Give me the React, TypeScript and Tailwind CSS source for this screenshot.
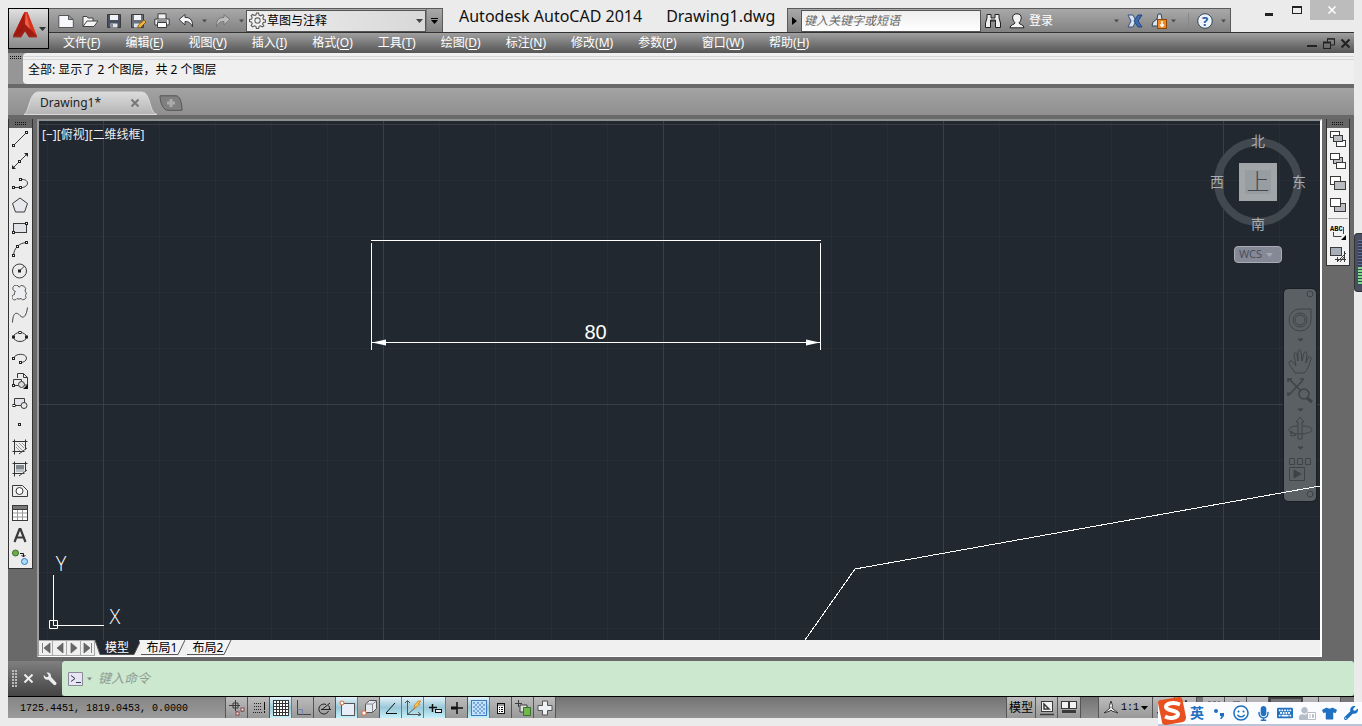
import type { ReactNode } from "react";
import { FaKeyboard, FaMicrophone, FaRegSmile, FaTshirt, FaUser, FaWrench } from "react-icons/fa";

const uiFont = "font-['Noto_Sans','Noto_Sans_CJK_SC',sans-serif]";

const menus = [
  ["文件", "F"],
  ["编辑", "E"],
  ["视图", "V"],
  ["插入", "I"],
  ["格式", "O"],
  ["工具", "T"],
  ["绘图", "D"],
  ["标注", "N"],
  ["修改", "M"],
  ["参数", "P"],
  ["窗口", "W"],
  ["帮助", "H"],
];

function Icon({ children, size = 16 }: { children: ReactNode; size?: number }) {
  return (
    <svg width={size} height={size} viewBox="0 0 16 16" fill="none" stroke="#3a3a3a" className="shrink-0">
      {children}
    </svg>
  );
}

function Caret({ className = "text-[#444]" }: { className?: string }) {
  return (
    <svg width="7" height="4" viewBox="0 0 7 4" fill="currentColor" className={`shrink-0 ${className}`}>
      <path d="M0 0h7L3.500 4z" />
    </svg>
  );
}

function Node({ x, y }: { x: number; y: number }) {
  return <rect x={x - 1} y={y - 1} width="2" height="2" fill="#fff" stroke="#222" />;
}

const drawTools: { label: string; icon: ReactNode }[] = [
  { label: "直线", icon: <><path d="M2 14 14 2" /><Node x={1.5} y={14.5} /><Node x={14.5} y={1.5} /></> },
  { label: "构造线", icon: <><path d="M2 14 14 2" /><path d="M0 16v-4l4 4zM16 0v4l-4-4z" fill="#222" stroke="none" /><Node x={7.5} y={8.5} /></> },
  { label: "多段线", icon: <><path d="M1.500 12.500h7M8.500 4.500c9-1 9 7 2 8H8.500" /><Node x={1.5} y={12.5} /><Node x={8.5} y={12.5} /><Node x={8.5} y={4.5} /></> },
  { label: "正多边形", icon: <path d="M8 1 15.500 6.500 12.500 15h-9L.5 6.500z" fill="#e6e8ee" /> },
  { label: "矩形", icon: <><rect x="1.500" y="4.500" width="13" height="9" fill="#e0e2e8" /><Node x={1.5} y={13.5} /><Node x={14.5} y={4.5} /></> },
  { label: "圆弧", icon: <><path d="M1.500 14.500C2 7 7 2 14.500 1.500" /><Node x={1.5} y={14.5} /><Node x={5.5} y={5.5} /><Node x={14.5} y={1.5} /></> },
  { label: "圆", icon: <><circle cx="7.500" cy="8" r="7" /><path d="m7.500 8 5-5" /><Node x={7.5} y={8} /></> },
  { label: "修订云线", icon: <path d="M3.500 6.500A3.200 3.200 0 1 1 7 2.200 3.300 3.300 0 1 1 13 6a3.200 3.200 0 0 1 .5 4.500 2.700 2.700 0 1 1-4.500 3 3.700 3.700 0 0 1-4 0A2.700 2.700 0 1 1 2.500 9.500a2.500 2.500 0 0 1 1-3z" fill="#eceef2" stroke="#555" /> },
  { label: "样条曲线", icon: <path d="M.5 15.500C1 3 6 6 8 8.500S14 12 15.500.5" stroke="#444" /> },
  { label: "椭圆", icon: <><ellipse cx="8" cy="8" rx="6.500" ry="4.500" /><Node x={1.5} y={8} /><Node x={14.5} y={8} /><Node x={8} y={3.5} /></> },
  { label: "椭圆弧", icon: <><path d="M1.500 7.500C3 2 14 2 14.500 7c0 3-3 4.500-6 4.500" /><Node x={1.5} y={7.5} /><Node x={8.5} y={11.5} /></> },
  { label: "插入块", icon: <><path d="M5.500 5V.5h6l4 4V12h-4M1.500 12.500v-6h8v2M1.500 12.500h6" /><path d="M11.500.5v4h4" /><circle cx="9.500" cy="11.500" r="3" fill="#ddd" /><path d="M16 11v5h-5z" fill="#111" stroke="none" /><Node x={1.5} y={12.5} /></> },
  { label: "创建块", icon: <><path d="M2.500 10.500v-7h10v4M2.500 10.500h7" fill="#e4e5ea" /><circle cx="12" cy="10.500" r="3" fill="#e8e8e8" /><Node x={2} y={10.5} /></> },
  { label: "点", icon: <Node x={7.5} y={7.5} /> },
  { label: "图案填充", icon: <><path d="m4 5 7 7M4 8l4 4M7 4l5 5M10 4l3 3" stroke="#999" /><path d="M.5 2.500h15M.5 12.500h12M2.500.5v15M13.500.5v10" stroke="#333" /><path d="m7 15 8-6" stroke="#444" /></> },
  { label: "渐变色", icon: <><rect x="4" y="4" width="8" height="4" fill="#7f878d" stroke="none" /><path d="M4 8h8v3H4z" fill="#b9bec2" stroke="none" /><path d="M.5 2.500h15M.5 12.500h12M2.500.5v15M13.500.5v10" stroke="#333" /><path d="m7 15 8-6" stroke="#444" /></> },
  { label: "面域", icon: <><path d="M.5 2.500h10l5 5v6H.5z" fill="#eee" /><circle cx="7.500" cy="8" r="3.500" fill="#fff" /></> },
  { label: "表格", icon: <><rect x=".5" y=".5" width="15" height="15" fill="#fff" /><path d="M1 1h14v3H1z" fill="#777" stroke="none" /><path d="M.5 4.500h15" /><path d="M1 8h14M1 12h14M5.500 5v10M10.500 5v10" stroke="#999" /></> },
  { label: "多行文字", icon: <path d="m2.500 15 5-13h1l5 13M4.500 10.500h7" strokeWidth="2.200" /> },
  { label: "添加选定对象", icon: <><circle cx="3.500" cy="4" r="3" fill="#6cae48" stroke="#3f6b2c" /><circle cx="12.500" cy="12.500" r="3" fill="#a9dcff" stroke="#3278b8" /><path d="M8 4.500h3.500v3M9.500 6l2 2 2-2" stroke="#111" /></> },
];

const orderTools: { label: string; icon: ReactNode }[] = [
  { label: "前置", icon: <><rect x=".5" y=".5" width="9" height="6" fill="#fff" /><rect x="6.500" y="9.500" width="9" height="6" fill="#fff" /><rect x="3.500" y="4.500" width="9" height="6" fill="#b9bdc2" /></> },
  { label: "后置", icon: <><rect x="3.500" y="4.500" width="9" height="6" fill="#b9bdc2" /><rect x=".5" y=".5" width="9" height="6" fill="#fff" /><rect x="6.500" y="9.500" width="9" height="6" fill="#fff" /></> },
  { label: "置于对象之上", icon: <><rect x=".5" y="1.500" width="10" height="8" fill="#fff" /><rect x="4.500" y="6.500" width="11" height="8" fill="#b9bdc2" /></> },
  { label: "置于对象之下", icon: <><rect x="4.500" y="6.500" width="11" height="8" fill="#b9bdc2" /><rect x=".5" y="1.500" width="10" height="8" fill="#fff" /></> },
];

const statusTools: { label: string; on?: boolean; icon: ReactNode }[] = [
  { label: "推断约束", icon: <><path d="M0 5.500h11M6.500 0v11M4 3h5v5H4zM8 11v4M13 8v4" /><rect x="7" y="12" width="3" height="3" fill="#eee" stroke="#844" /><rect x="12" y="8" width="3" height="3" fill="#eee" stroke="#844" /></> },
  { label: "捕捉模式", icon: <><path d="M3 3.500h8M3 6.500h8M3 9.500h8M2 12.500h9" strokeDasharray="1 1" stroke="#222" /><path d="M13.500 2v8M13.500 11v2" stroke="#111" /></> },
  { label: "栅格显示", on: true, icon: <><rect x=".5" y=".5" width="15" height="15" fill="#fff" /><path d="M0 3.500h16M0 6.500h16M0 9.500h16M0 12.500h16M3.500 0v16M6.500 0v16M9.500 0v16M12.500 0v16" stroke="#333" /></> },
  { label: "正交模式", icon: <><path d="M2.500 0v14.500H16" stroke="#444" /><path d="M2.500 9.500h5v5" stroke="#7581b5" /></> },
  { label: "极轴追踪", icon: <><path d="M11.500 11A5 5 0 1 1 9 4.500M4 9.500h10M5 9.500 13 3" stroke="#222" /><path d="M11.500 5.500a5 5 0 0 1 1 4" stroke="#111" /></> },
  { label: "对象捕捉", on: true, icon: <><rect x="2.500" y="3.500" width="13" height="12" fill="#e8eef8" stroke="#555" /><circle cx="3" cy="3" r="2" fill="#fff" stroke="#e0622c" /></> },
  { label: "三维对象捕捉", icon: <><path d="m4.500 4 4-3.500h7v8l-4 4h-7z" fill="#e5e9f2" stroke="#555" /><path d="M4.500 4h7v8M11.500 4l4-3" stroke="#888" /><circle cx="3" cy="13" r="2.200" fill="#fff" stroke="#e0622c" /></> },
  { label: "对象捕捉追踪", on: true, icon: <path d="M3 13.500h11M3 13 12 3" stroke="#111" /> },
  { label: "动态UCS", on: true, icon: <><path d="M2.500 1v13.500H16M0 3l2.500-2.500L5 3M13 12l3 2.500-3 1.500M2 15l10-9" stroke="#555" /><path d="M9 6 13 1h3l-3 3h2l-6 5 1-3z" fill="#ffc64a" stroke="#c66b13" strokeWidth=".6" /></> },
  { label: "动态输入", on: true, icon: <><path d="M2 7.500h8M5.500 4v8" strokeWidth="1.500" stroke="#111" /><rect x="8.500" y="9.500" width="6" height="3" fill="#eee" stroke="#111" /></> },
  { label: "线宽", icon: <><path d="M2 8h6" strokeWidth="3" stroke="#111" /><path d="M7 8h7M8 2v12" strokeWidth="1.500" stroke="#111" /></> },
  { label: "透明度", on: true, icon: <><rect x=".5" y=".5" width="15" height="15" fill="#c3e0fd" stroke="#3e7cbd" /><path d="M2 3h12M2 7h12M2 11h12" strokeDasharray="2 2" strokeWidth="2" stroke="#79a9d8" /><path d="M4 5h10M4 9h10M4 13h10" strokeDasharray="2 2" strokeWidth="2" stroke="#79a9d8" /></> },
  { label: "快捷特性", icon: <><rect x="4.500" y="3.500" width="7" height="10" fill="#fff" stroke="#111" /><path d="M5 5h6" stroke="#333" /><path d="M6 7.500h1M8 7.500h2M6 9.500h1M8 9.500h2M6 11.500h1M8 11.500h2" stroke="#111" /></> },
  { label: "选择循环", icon: <><path d="M0 3.500h7M3.500 0v7" /><path d="M5 5h7v7H5z" fill="#dfe3e6" /><path d="M8.500 7.500h7v8h-7z" fill="#70b84b" stroke="#39702a" /></> },
  { label: "注释监视器", icon: <path d="M5.500 1h5v4.500H15v5h-4.500V15h-5v-4.500H1v-5h4.500z" fill="#eef1f5" stroke="#555" /> },
];

const quickTools: { label: string; icon: ReactNode }[] = [
  { label: "新建", icon: <path d="M.8 2.500h10l4.500 4v8H.8zM10.500 2.500v4h4.500" fill="#f6f7fa" stroke="#555" /> },
  { label: "打开", icon: <path d="M1 13.500v-10h4l1 1.500h5v3h5l-4 5.500zM1 13.500 5 8h6" fill="#f3f3f5" stroke="#444" /> },
  { label: "保存", icon: <><path d="M1.500 1.500h13v13h-13z" fill="#4a5063" /><path d="M4 2h8v5H4z" fill="#f0f2f6" stroke="none" /><path d="M4.500 10.500h7v4h-7z" fill="#dfe2e8" stroke="none" /><path d="M6 11v3" stroke="#333" /></> },
  { label: "另存为", icon: <><path d="M1.500 1.500h12v13h-12z" fill="#6a6f7b" /><path d="M4 2h7v5H4z" fill="#f0f2f6" stroke="none" /><path d="M4 10.500h7v4H4z" fill="#dfe2e8" stroke="none" /><path d="m7.500 15 1-3 5.500-5 2 2-5.500 5.500z" fill="#f3b93f" stroke="#8c5a14" /></> },
  { label: "打印", icon: <><path d="M4 6V.8h8V6M.8 6h14.400v6H.8z" fill="#eef0f4" /><path d="M3.500 9.500h9v5h-9z" fill="#fff" /><path d="M3 8h10" /></> },
];

function DropDot() {
  return <Caret className="w-[5px] text-[#4d4d4d]" />;
}

function TitleBar() {
  return (
    <div className="flex h-8 items-end">
      <div className="flex h-6 shrink-0 items-center border-t border-r border-[#5a5a5a] bg-linear-to-b from-[#a9a9a9] to-[#828282]">
        <div className="flex items-center gap-2 pl-[9px]">
          {quickTools.map((t) => (
            <button key={t.label} aria-label={t.label}>
              <Icon>{t.icon}</Icon>
            </button>
          ))}
          <button aria-label="放弃" className="flex items-center gap-2">
            <Icon><path d="M1 6.500 7 1.500v3c6-.5 8 4 7.500 9.500C13 10 11 8.500 7 8.500v3.500z" fill="#f4f5f8" /></Icon>
            <DropDot />
          </button>
          <button aria-label="重做" className="flex items-center gap-2">
            <Icon><path d="M15 6.500 9 1.500v3C3 4 1 8.500 1.500 14 3 10 5 8.500 9 8.500v3.500z" fill="#bbb" stroke="#777" /></Icon>
            <DropDot />
          </button>
        </div>
        <button className="ml-0.5 flex h-[22px] w-[180px] items-center gap-px border border-[#555] bg-linear-to-r from-[#eee] to-[#d8d8d8] px-0.5 text-xs text-black">
          <Icon size={17}>
            <path d="m7 1 2 0 .5 2 1.500.6L13 2.500 14 4l-1 1.600.5 1.400 2 .5v2l-2 .3-.7 1.500L14 13l-1.500 1-1.600-1-1.400.5L9 15.500H7l-.5-2L5 13l-1.700 1L2 12.700l1-1.700L2.500 9.500.5 9V7l2-.3L3 5.200 2 3.500 3.500 2.300 5 3.200 6.500 2.800z" stroke="#555" fill="#f2f2f2" />
            <circle cx="8" cy="8" r="2.500" stroke="#666" />
          </Icon>
          <span className="flex-1 text-left">草图与注释</span>
          <Caret />
        </button>
        <button aria-label="自定义" className="flex h-full w-4 flex-col items-center justify-center gap-px border-l border-[#777]">
          <span className="h-px w-[7px] bg-black" />
          <Caret className="text-black" />
        </button>
      </div>
      <h1 className="flex h-full min-w-0 flex-1 items-center gap-6 overflow-hidden pl-4 font-['Noto_Sans',sans-serif] text-base whitespace-nowrap text-[#111]">
        <span>Autodesk AutoCAD 2014</span>
        <span>Drawing1.dwg</span>
      </h1>
      <div className="flex h-6 w-[444px] shrink-0 items-center border border-b-0 border-[#5a5a5a] bg-linear-to-b from-[#a9a9a9] to-[#828282]">
        <button aria-label="展开" className="flex w-[13px] justify-center">
          <svg width="5" height="8" viewBox="0 0 5 8"><path d="M0 0v8l5-4z" /></svg>
        </button>
        <input
          aria-label="搜索"
          placeholder="键入关键字或短语"
          className="h-[22px] w-[180px] border border-[#555] bg-linear-to-b from-[#eee] to-white pl-0.5 text-xs italic placeholder:text-[#666]"
        />
        <button aria-label="搜索" className="ml-1">
          <Icon><path d="M2 5V1.500h4V5h4V1.500h4V5l1.500 5v4.500h-5V7H5.500v7.500H.5V10zM5.500 8h5" fill="#eee" stroke="#222" /></Icon>
        </button>
        <button className="ml-2 flex items-center gap-1 text-xs text-white">
          <Icon><path d="M8 .8c6 0 4.500 7 2 9 0 2 5 1.500 5 5H1c0-3.500 5-3 5-5C3 7 2 .8 8 .8z" fill="#f3f4f6" stroke="#222" /></Icon>
          登录
        </button>
        <span className="ml-auto" />
        <DropDot />
        <button aria-label="Exchange" className="ml-2">
          <Icon><path d="M1 2h5l3 6-3 6H1l3-6z" fill="#d7e3f2" stroke="#34517d" /><path d="M15 2h-4L7 8l4 6h4l-4-6z" fill="#3d6cb0" stroke="#23457f" /></Icon>
        </button>
        <button aria-label="保持连接" className="mr-1 ml-2 flex items-center gap-1">
          <Icon><path d="M7 1h3l1 5 4 7H1l1-4 4-3z" fill="#dde4ec" stroke="#345" /><rect x="6.500" y="6.500" width="9" height="9" fill="#ed8a23" stroke="#8a4708" /><path d="M11 8v4M9 11.500l2 2 2-2" stroke="#fff" strokeWidth="1.500" /></Icon>
          <DropDot />
        </button>
        <button aria-label="帮助" className="mr-1 ml-2 flex items-center gap-2 border-l border-[#888] pl-2">
          <svg width="16" height="16" viewBox="0 0 16 16">
            <circle cx="8" cy="8" r="7.300" fill="#eef4fb" stroke="#345" />
            <text x="8" y="13" textAnchor="middle" fontSize="13" fontWeight="700" fill="#2459a5">?</text>
          </svg>
          <DropDot />
        </button>
      </div>
      <div className="ml-6 flex h-5 shrink-0 self-start text-[#222]">
        <button aria-label="最小化" className="flex w-7 items-center justify-center">
          <span className="mt-2 h-[3px] w-2 bg-[#222]" />
        </button>
        <button aria-label="最大化" className="flex w-[27px] items-center justify-center">
          <span className="h-2 w-2.5 border border-t-2 border-[#222]" />
        </button>
        <button aria-label="关闭" className="flex w-11 items-center justify-center bg-[#bcbcbc]">
          <svg width="8" height="8" viewBox="0 0 8 8" stroke="#fff" strokeWidth="1.500"><path d="m.5.5 7 7M7.500.5l-7 7" /></svg>
        </button>
      </div>
    </div>
  );
}

function MenuBar() {
  return (
    <nav className="flex h-[21px] items-center gap-px border-t border-[#333] bg-linear-to-b from-[#a0a0a0] to-[#555] pl-0.5 text-xs text-white">
      {menus.map(([name, key]) => (
        <button key={key} className="px-3 leading-5 whitespace-nowrap">
          {name}(<span className="underline underline-offset-2">{key}</span>)
        </button>
      ))}
      <div className="ml-auto flex items-center gap-1.5 pr-1">
        <button aria-label="最小化图形" className="mt-1.5 h-0.5 w-2.5 bg-[#222]" />
        <button aria-label="还原图形">
          <svg width="12" height="11" viewBox="0 0 12 11" fill="none" stroke="#222"><path d="M4.500 4V1h7v6H8M4 .8h8" /><rect x=".5" y="4.500" width="7" height="6" /><path d="M0 4.500h8" strokeWidth="2" /></svg>
        </button>
        <button aria-label="关闭图形">
          <svg width="9" height="9" viewBox="0 0 9 9" stroke="#222" strokeWidth="2.200"><path d="m.5.5 8 8M8.500.5l-8 8" /></svg>
        </button>
      </div>
    </nav>
  );
}

function Header() {
  return (
    <header className="flex">
      <div className="flex flex-col pt-2">
        <button aria-label="应用程序菜单" className="h-[41px] w-[41px] border border-black bg-linear-to-b from-[#e0e0e0] to-[#8a8a8a]">
          <svg width="39" height="39" viewBox="0 0 39 39">
            <path d="M15.500 3 4 27l8 1 4-6 4 6 8-1L18.500 3z" fill="#d8321c" />
            <path d="M15.500 3 4 27l8-4 4-8z" fill="#a81a10" />
            <path d="M16 15 4 27v1.500h8l4-6 4 6h8V27z" fill="#8e1710" opacity=".75" />
            <path d="m17 3 4 17-5-5z" fill="#f0624a" />
            <path d="M30 18h7l-3.500 4z" fill="#333" />
          </svg>
        </button>
        <div className="flex-1 bg-[#5d5d5d]" />
      </div>
      <div className="flex min-w-0 flex-1 flex-col">
        <TitleBar />
        <MenuBar />
      </div>
    </header>
  );
}

const dotRow = "h-px w-full bg-[repeating-linear-gradient(90deg,#111_0_1px,transparent_1px_2px)]";

function Dots() {
  return (
    <div className="flex w-3 flex-col gap-px">
      <div className={dotRow} />
      <div className={dotRow} />
    </div>
  );
}

function Grip() {
  return (
    <div className="flex h-[9px] items-center justify-center bg-[#666]">
      <Dots />
    </div>
  );
}

function FileTabs() {
  return (
    <div className="flex h-[35px] items-end border-y-4 border-[#696969] bg-linear-to-b from-[#a3a3a3] to-[#8f8f8f] pl-4">
      <div className="relative flex h-6 w-[135px] items-center">
        <svg className="absolute inset-0" width="135" height="24" viewBox="0 0 135 24">
          <defs>
            <linearGradient id="tab" x2="0" y2="1">
              <stop stopColor="#dcdcdc" />
              <stop offset="1" stopColor="#b4b4b4" />
            </linearGradient>
          </defs>
          <path d="M0 23.500C5 23 5 1 14 1h104c9 0 7 22 15 22.500z" fill="url(#tab)" stroke="#d9d9d9" />
        </svg>
        <button className="relative flex-1 pl-4 text-left text-xs text-[#222]">Drawing1*</button>
        <button aria-label="关闭选项卡" className="relative mr-5">
          <svg width="8" height="8" viewBox="0 0 8 8" stroke="#777" strokeWidth="2"><path d="m.5.5 7 7M7.500.5l-7 7" /></svg>
        </button>
      </div>
      <button aria-label="新图形" className="mb-1">
        <svg width="24" height="16" viewBox="0 0 24 16" fill="#808080" stroke="#555">
          <path d="M1 .8h16c4 0 6 7 6 14.500H9C4 15.500 1 7 1 .8z" />
          <path d="M12 4v8M8 8h8" stroke="#aaa" strokeWidth="3" />
        </svg>
      </button>
    </div>
  );
}

function DrawToolbar() {
  return (
    <div className="w-[25px] shrink-0 self-start border border-t-0 border-[#333] bg-[#ececec]">
      <Grip />
      {drawTools.map((t) => (
        <button key={t.label} aria-label={t.label} className="flex h-[22px] w-full items-center pl-[3px]">
          <Icon>{t.icon}</Icon>
        </button>
      ))}
    </div>
  );
}

function OrderToolbar() {
  return (
    <div className="mx-1 w-6 shrink-0 self-start border border-t-0 border-[#333] bg-[#f2f2f2]">
      <Grip />
      {orderTools.map((t) => (
        <button key={t.label} aria-label={t.label} className="flex h-[22px] w-full items-center justify-center">
          <Icon>{t.icon}</Icon>
        </button>
      ))}
      <div className="mx-px my-[2px] h-px bg-[#aaa]" />
      <button aria-label="注释前置" className="flex h-[22px] w-full items-center justify-center">
        <svg width="16" height="16" viewBox="0 0 16 16">
          <text x="0" y="7" fontSize="7" fontWeight="700" fontFamily="Liberation Mono">ABC</text>
          <path d="M3.500 8v4.500h8M13.500 3v7" fill="none" stroke="#444" />
          <path d="M16 11v5h-5z" />
        </svg>
      </button>
      <button aria-label="图案填充后置" className="flex h-[22px] w-full items-center justify-center">
        <Icon><rect x=".5" y="1.500" width="11" height="8" fill="#a9afb8" /><path d="M5 13.500h11M7.500 11v5M14.500 5v11M8 15l8-8M10 16l4-5" /></Icon>
      </button>
    </div>
  );
}

function ViewCube() {
  return (
    <div className="absolute top-[10px] right-[12px] flex w-[100px] flex-col items-center">
      <svg width="100" height="102" viewBox="0 0 100 102" fontSize="14" fill="#a9adb0" textAnchor="middle" className="overflow-visible font-['Noto_Sans_CJK_SC',sans-serif]">
        <circle cx="50" cy="51" r="40" fill="none" stroke="#414850" strokeWidth="8" />
        <rect x="31" y="32" width="38" height="38" fill="#a3a6a8" />
        <rect x="37" y="39" width="26" height="24" fill="#989da1" />
        <text x="50" y="15">北</text>
        <text x="50" y="98">南</text>
        <text x="9" y="56">西</text>
        <text x="91" y="56">东</text>
        <text x="50" y="59" fontSize="23" fontWeight="300" fill="#41474d">上</text>
      </svg>
      <button className="mt-[13px] flex h-[17px] w-12 items-center gap-1 rounded-sm border border-[#a9acb6] bg-[#858895] pl-1 text-[11px] text-[#4b4f5c]">
        WCS
        <Caret className="text-[#a5a8b3]" />
      </button>
    </div>
  );
}

function NavBar() {
  return (
    <div className="absolute top-[168px] right-1 flex w-8 flex-col items-center rounded-sm bg-[#5b6064] outline outline-[#1a1f25]">
      <svg width="32" height="212" viewBox="0 0 32 212" fill="none" stroke="#3e4347">
        <circle cx="26" cy="5" r="3" />
        <path d="M16 20h11v11a11 11 0 1 1-11-11z" />
        <circle cx="16" cy="31" r="7" />
        <circle cx="16" cy="31" r="5" />
        <path d="M14 50h5l-2.500 2zM14 120h5l-2.500 2zM14 158h5l-2.500 2z" fill="#3e4347" />
        <path d="M11 84C8 78 3 75 6 72c2-1 4 2 6 5l-2-11c0-3 3-3 3 0l1 6V63c0-3 3-3 3 0l1 9 2-8c1-2 3-1 3 1l-1 9 2-5c1-2 4-1 3 1-2 6-3 11-7 14z" />
        <path d="m5 90 15 15M5 106 19 91M4 90h4M4 89v4M20 90h-4M4 107v-4" strokeWidth="1.500" />
        <circle cx="20" cy="105" r="5" fill="#5b6064" strokeWidth="1.500" />
        <path d="m23 109 5 4" strokeWidth="3" />
        <path d="M14 150v-17h-2l4-5 4 5h-2v17z" />
        <path d="M14 137c-6 0-9 2-9 4s5 4 11 4 12-2 12-4-4-4-9-4M7 142l5 4-5 1z" />
        <path d="M5.500 169.500h5v6h-5zM13.500 169.500h5v6h-5zM21.500 169.500h5v6h-5zM5.500 178.500h15v13h-15z" />
        <path d="m10 181 7 4-7 4z" fill="#3e4347" />
        <circle cx="26" cy="205" r="3" />
      </svg>
    </div>
  );
}

function Canvas() {
  return (
    <div className="relative min-h-0 flex-1 overflow-hidden bg-[#212830]">
      <svg className="absolute inset-0 h-full w-full">
        <defs>
          <pattern id="minor" x="8" y="3" width="56" height="56" patternUnits="userSpaceOnUse">
            <path d="M.5 0v56M0 .5h56" stroke="#272e36" />
          </pattern>
          <pattern id="major" x="64" y="3" width="280" height="280" patternUnits="userSpaceOnUse">
            <path d="M.5 0v280M0 .5h280" stroke="#383f47" />
          </pattern>
        </defs>
        <rect width="100%" height="100%" fill="url(#minor)" />
        <rect width="100%" height="100%" fill="url(#major)" />
      </svg>
      <div className="absolute top-1.5 left-[3px] text-xs text-[#eee]">
        <button>[−]</button>
        <button>[俯视]</button>
        <button>[二维线框]</button>
      </div>
      <ViewCube />
      <NavBar />
      <svg className="pointer-events-none absolute inset-0 h-full w-full" fill="none" stroke="#fff">
        <g shapeRendering="crispEdges">
          <path d="M332 119.500h450M332.500 122v107M781.500 122v107M333 221.500h448" />
          <path d="m766 519 50-71 465-83" />
        </g>
        <path d="m333 221.500 14-3v6zM781 221.500l-14-3v6z" fill="#fff" stroke="none" />
        <text x="556.500" y="218" fontSize="20" textAnchor="middle" fill="#fff" stroke="none" fontFamily="Liberation Sans">80</text>
      </svg>
      <svg className="absolute bottom-0 left-2.5 overflow-visible" width="80" height="90" viewBox="0 0 80 90" fill="none" stroke="#fff">
        <path d="M4.500 25v50.500H55M.5 70.500h8v8h-8z" />
        <g fill="#fff" stroke="none" fontSize="20" fontFamily="Open Sans" fontWeight="300" textAnchor="middle">
          <text x="12" y="21">Y</text>
          <text x="66" y="74">X</text>
        </g>
      </svg>
    </div>
  );
}

function LayoutTab({ name, active }: { name: string; active?: boolean }) {
  return (
    <button className={`relative h-4 text-xs leading-4 ${active ? "w-11 text-white" : "w-[46px] text-black"}`}>
      <svg className="absolute inset-0 overflow-visible" width="46" height="16" viewBox="0 0 46 16">
        <path d="M0 0l5 14.500h34L46 0z" fill={active ? "#212830" : "#f3f3f3"} />
        <path d={active ? "M0 0l5 14.500h34L46 0" : "M2 14.500h37L46 0"} fill="none" stroke="#555" />
      </svg>
      <span className="relative">{name}</span>
    </button>
  );
}

function LayoutTabs() {
  const nav = [
    ["第一个", "M2.500 1v10M10 1v10L4 6z"],
    ["上一个", "M9 1v10L3 6z"],
    ["下一个", "M3 1v10l6-5z"],
    ["最后一个", "M9.500 1v10M2 1v10l6-5z"],
  ];
  return (
    <div className="flex h-4 bg-[#f0f0f0]">
      {nav.map(([label, d]) => (
        <button key={label} aria-label={label} className="flex w-3.5 items-center justify-center border border-l-0 border-[#aaa]">
          <svg width="12" height="12" viewBox="0 0 12 12" fill="#666" stroke="#666" strokeWidth=".8"><path d={d} /></svg>
        </button>
      ))}
      <div className="flex">
        <LayoutTab name="模型" active />
        <LayoutTab name="布局1" />
        <LayoutTab name="布局2" />
      </div>
    </div>
  );
}

function CommandLine() {
  return (
    <div className="flex h-[35px] bg-[#696969]">
      <div className="flex w-[54px] items-center gap-1.5 bg-linear-to-b from-[#808080] to-[#444] pl-1">
        <svg width="6" height="18" viewBox="0 0 6 18" stroke="#bbb" strokeWidth="2" strokeDasharray="2 1" className="shrink-0">
          <path d="M1 0v18M4 0v18" />
        </svg>
        <button aria-label="关闭">
          <svg width="9" height="9" viewBox="0 0 9 9" stroke="#eee" strokeWidth="2"><path d="m.5.5 8 8M8.500.5l-8 8" /></svg>
        </button>
        <button aria-label="自定义" className="ml-1 shrink-0">
          <svg width="14" height="14" viewBox="0 0 16 16" fill="#eee">
            <path d="M1 3.500 3.500 6 6 5.500 6.300 3 4 .8C7-.3 9.800 2 9 5.500l6 6.500c1.500 2-1 4-2.800 2.500L6 8.500C3 9.500 0 7 1 3.500z" />
          </svg>
        </button>
      </div>
      <div className="flex flex-1 items-center gap-1 rounded-[3px] bg-[#cce8cf] pl-1.5">
        <button aria-label="最近使用的命令" className="flex items-center gap-1">
          <svg width="15" height="14" viewBox="0 0 15 14" fill="#e6e6f2" stroke="#8a8a9a">
            <path d="M.5.5h14v13H.5z" />
            <path d="m3 3.500 4 3-4 3M8 10.500h5" fill="none" stroke="#335" />
          </svg>
          <Caret className="w-[5px] text-[#888]" />
        </button>
        <input aria-label="命令" placeholder="键入命令" className="ml-0.5 flex-1 bg-transparent text-[13px] italic outline-none placeholder:text-[#8f9c91]" />
      </div>
    </div>
  );
}

const statusCell = "flex h-full items-center justify-center border-r border-[#555] bg-linear-to-b from-[#bcbcbc] to-[#989898]";

function StatusBar() {
  return (
    <footer className="flex h-[22px] border-t border-black bg-linear-to-b from-[#747474] to-[#929292]">
      <div className="flex w-[218px] items-center border-r border-[#555] bg-linear-to-b from-[#858585] to-[#9b9b9b] pt-0.5 pl-3 font-['Liberation_Mono',monospace] text-[10px] whitespace-pre text-black">
        1725.4451, 1819.0453, 0.0000
      </div>
      {statusTools.map((t) => (
        <button
          key={t.label}
          aria-label={t.label}
          aria-pressed={!!t.on}
          className={
            t.on
              ? "flex h-full w-[22px] items-center justify-center border-r border-[#777] bg-linear-to-b from-[#e2f1f7] via-[#9bc8d8] to-[#c5f1fa]"
              : `w-[22px] ${statusCell}`
          }
        >
          <Icon>{t.icon}</Icon>
        </button>
      ))}
      <div className="ml-auto flex w-[348px] text-xs text-black">
        <button className={`w-[30px] border-l ${statusCell}`}>模型</button>
        <button aria-label="快速查看布局" className={`w-[22px] ${statusCell}`}>
          <Icon><rect x="2.500" y="1.500" width="11" height="10" fill="#f3f3f3" /><path d="M5 4v5h5zM1 14.500h14" strokeWidth="1.500" /></Icon>
        </button>
        <button aria-label="快速查看图形" className={`w-[23px] ${statusCell}`}>
          <Icon><rect x=".5" y="1.500" width="7" height="7" fill="#f3f3f3" /><rect x="8.500" y="1.500" width="7" height="7" fill="#f3f3f3" /><path d="M1 11.500h14" strokeWidth="3" /></Icon>
        </button>
        <span className="w-[18px] border-r border-[#555]" />
        <button className={`w-[54px] gap-0.5 font-['Liberation_Mono',monospace] text-[10px] ${statusCell}`}>
          <Icon><path d="M8 1 6.500 5.500 7 8l-6 5 6-2 1-1 1 1 6 2-6-5 .5-2.500z" fill="#eee" /></Icon>
          1:1
          <Caret className="text-black" />
        </button>
        <span className={`w-[22px] ${statusCell}`}>
          <Icon><path d="M8 1 6.500 5.500 7 8l-6 5 6-2 1-1 1 1 6 2-6-5 .5-2.500z" fill="#eee" /></Icon>
        </span>
        <span className={`w-[22px] ${statusCell}`}>
          <Icon><path d="M8 0 6 6h4z" fill="#ddd" /></Icon>
        </span>
        <span className="w-1.5" />
        <span className={`w-[22px] ${statusCell}`}>
          <Icon><path d="M2 4V2h3M7 2h3v2M12 2h2v2" /></Icon>
        </span>
        <span className={`w-[22px] ${statusCell}`}>
          <Icon><path d="M5 6V2h7v4" /></Icon>
        </span>
        <span className={`w-[22px] ${statusCell}`} />
        <span className="w-[34px] border-2 border-[#444] bg-[#777]" />
        <span className={`w-4 ${statusCell}`} />
        <span className={`w-[22px] ${statusCell}`}>
          <Icon><path d="M2 3h12v6H2z" fill="#eee" /></Icon>
        </span>
      </div>
    </footer>
  );
}

function ImeBar() {
  return (
    <div className="absolute right-0 bottom-0 flex h-6 w-[204px] items-center border-b-2 border-[#b9c6d6] bg-[#fafcff] text-[#1f70c1]">
      <svg width="28" height="28" viewBox="0 0 28 28" className="-mt-1 shrink-0">
        <path d="M0 6Q0 3 3 3L21 0q3 0 3.500 3L28 20q0 4-3 5L8 28q-4 0-4-3z" fill="#e9501f" />
        <path d="M22 7.500C16 5 8 6 8 10s12 3 12 7-8 5-13 2.500" fill="none" stroke="#fff" strokeWidth="4" />
      </svg>
      <div className="flex flex-1 items-center">
        <button className="w-[22px] text-sm leading-4 font-bold">英</button>
        <button aria-label="标点" className="flex w-[22px] justify-center">
          <svg width="12" height="12" viewBox="0 0 12 12" fill="currentColor"><circle cx="3" cy="4" r="2" /><path d="M7 6h4v3L8.500 12H7l1.500-3H7z" /></svg>
        </button>
        <button aria-label="表情" className="flex w-[22px] justify-center"><FaRegSmile size={16} /></button>
        <button aria-label="语音" className="flex w-[22px] justify-center"><FaMicrophone size={15} /></button>
        <button aria-label="软键盘" className="flex w-[22px] justify-center"><FaKeyboard size={16} /></button>
        <button aria-label="账户" className="flex w-[22px] items-end justify-center text-[#b4bcc8]">
          <FaUser size={13} />
          <svg width="9" height="8" viewBox="0 0 9 8" fill="#fff" stroke="currentColor" className="-ml-1">
            <path d="M.5.5h8v7h-8zM3 2v4M5.500 2.500h1v3h-1z" />
          </svg>
        </button>
        <button aria-label="皮肤" className="flex w-[22px] justify-center"><FaTshirt size={15} /></button>
        <button aria-label="工具箱" className="flex w-[22px] justify-center"><FaWrench size={14} /></button>
      </div>
    </div>
  );
}

export default function App() {
  return (
    <div className={`relative flex h-screen flex-col overflow-hidden bg-[#ebebeb] px-2 pb-2 ${uiFont}`}>
      <Header />
      <div className="flex h-[31px] bg-[#969696]">
        <div className="w-[15px] pt-[3px] pl-0.5">
          <Dots />
        </div>
        <div className="flex flex-1 flex-col rounded-l-sm bg-[#f0f0f0] pt-[3px]">
          <div className="h-1 border-y border-[#d4d4d4]" />
          <p className="pl-[5px] text-xs leading-5 text-black">全部: 显示了 2 个图层，共 2 个图层</p>
        </div>
      </div>
      <FileTabs />
      <main className="flex min-h-0 flex-1 bg-[#696969] pb-1">
        <DrawToolbar />
        <div className="ml-1 flex min-w-0 flex-1 flex-col border-t-2 border-r-2 border-b border-l-2 border-t-[#8b9092] border-r-white border-b-white border-l-[#9c9c9c]">
          <Canvas />
          <LayoutTabs />
        </div>
        <OrderToolbar />
      </main>
      <CommandLine />
      <StatusBar />
      <div className="absolute top-[233px] right-0 flex h-[59px] w-2 flex-col justify-end rounded-l-sm border border-r-0 border-[#333] bg-[#4a4e63] py-1.5 pl-[3px]">
        <div className="h-7 bg-[repeating-linear-gradient(#5b7196_0_1px,#3a3f55_1px_3px)]" />
        <div className="h-[18px] bg-[repeating-linear-gradient(#7fd98a_0_2px,#2f4a50_2px_3px)]" />
      </div>
      <ImeBar />
    </div>
  );
}
